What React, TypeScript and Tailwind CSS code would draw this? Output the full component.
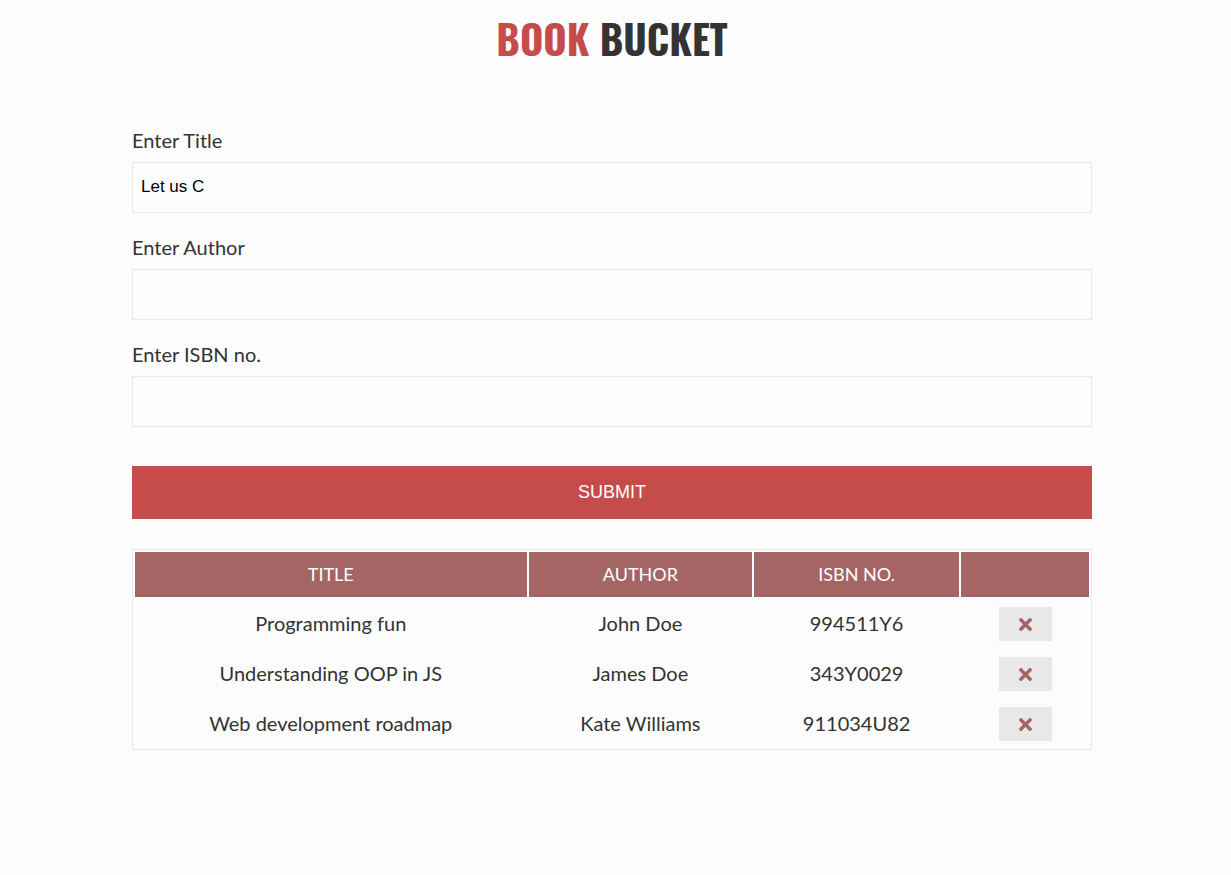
import { useState } from "react";
import type { FormEvent } from "react";
import { FaTimes } from "react-icons/fa";

type Book = { title: string; author: string; isbn: string };

const initialBooks: Book[] = [
  { title: "Programming fun", author: "John Doe", isbn: "994511Y6" },
  { title: "Understanding OOP in JS", author: "James Doe", isbn: "343Y0029" },
  { title: "Web development roadmap", author: "Kate Williams", isbn: "911034U82" },
];

const fields: { key: keyof Book; label: string }[] = [
  { key: "title", label: "Enter Title" },
  { key: "author", label: "Enter Author" },
  { key: "isbn", label: "Enter ISBN no." },
];

export default function App() {
  const [books, setBooks] = useState<Book[]>(initialBooks);
  const [draft, setDraft] = useState<Book>({ title: "Let us C", author: "", isbn: "" });

  const submit = (event: FormEvent) => {
    event.preventDefault();
    if (!draft.title || !draft.author || !draft.isbn) return;
    setBooks([...books, draft]);
    setDraft({ title: "", author: "", isbn: "" });
  };

  return (
    <div className="min-h-screen bg-[#fcfcfc] pr-[7px] font-['Lato',sans-serif] text-xl text-[#333333]">
      <main className="mx-auto max-w-[960px] pt-2 pb-16">
        <h1 className="text-center font-['Oswald','Roboto_Condensed','Liberation_Sans_Narrow',sans-serif] text-[40px] leading-[60px] font-bold">
          <span className="text-[#c64b4b]">BOOK</span> BUCKET
        </h1>

        <form onSubmit={submit} className="mt-[58px]">
          <div className="flex flex-col gap-5">
            {fields.map(({ key, label }) => (
              <div key={key} className="flex flex-col gap-2">
                <label htmlFor={key} className="leading-7">{label}</label>
                <input
                  id={key}
                  type="text"
                  value={draft[key]}
                  onChange={(e) => setDraft({ ...draft, [key]: e.target.value })}
                  className="h-[51px] w-full border border-[#e8e8e8] bg-transparent px-2 pb-0.5 font-['Liberation_Sans',sans-serif] text-[17px] text-black outline-none"
                />
              </div>
            ))}
          </div>
          <button type="submit" className="mt-[39px] h-[53px] w-full bg-[#c64b4b] pb-0.5 font-['Liberation_Sans',sans-serif] text-lg text-white">
            SUBMIT
          </button>
        </form>

        <table className="mt-[30px] w-full table-fixed border-separate border-spacing-0.5 border border-[#e8e8e8] text-center">
          <colgroup>
            <col className="w-[41.3%]" />
            <col className="w-[23.6%]" />
            <col className="w-[21.6%]" />
            <col />
          </colgroup>
          <thead>
            <tr className="h-[45px] bg-[#a56565] text-lg text-white">
              <th scope="col" className="pb-0.5 font-normal">TITLE</th>
              <th scope="col" className="pb-0.5 font-normal">AUTHOR</th>
              <th scope="col" className="pb-0.5 font-normal">ISBN NO.</th>
              <td></td>
            </tr>
          </thead>
          <tbody>
            {books.map((book, index) => (
              <tr key={book.isbn} className="h-12">
                <td>{book.title}</td>
                <td>{book.author}</td>
                <td>{book.isbn}</td>
                <td className="pt-2 pb-1.5">
                  <button
                    type="button"
                    aria-label={`Remove ${book.title}`}
                    onClick={() => setBooks(books.filter((_, i) => i !== index))}
                    className="mx-auto flex h-[34px] w-[53px] items-center justify-center bg-[#e8e8e8] text-[#a56565]"
                  >
                    <FaTimes className="h-[19px] w-[13px]" aria-hidden="true" />
                  </button>
                </td>
              </tr>
            ))}
          </tbody>
        </table>
      </main>
    </div>
  );
}
